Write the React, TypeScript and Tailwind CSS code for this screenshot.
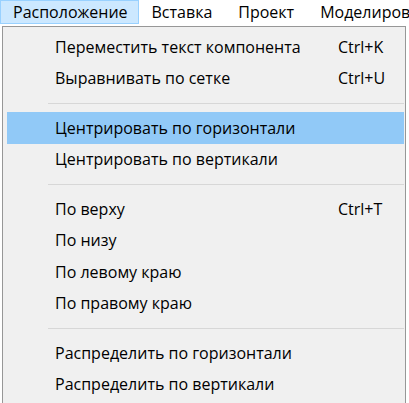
import React from "react";

type Item = { label: string; shortcut?: string; active?: boolean } | "sep";

const items: Item[] = [
  { label: "Переместить текст компонента", shortcut: "Ctrl+K" },
  { label: "Выравнивать по сетке", shortcut: "Ctrl+U" },
  "sep",
  { label: "Центрировать по горизонтали", active: true },
  { label: "Центрировать по вертикали" },
  "sep",
  { label: "По верху", shortcut: "Ctrl+T" },
  { label: "По низу" },
  { label: "По левому краю" },
  { label: "По правому краю" },
  "sep",
  { label: "Распределить по горизонтали" },
  { label: "Распределить по вертикали" },
];

const menus = ["Расположение", "Вставка", "Проект", "Моделирование"];

export default function App() {
  return (
    <div className="w-[409px] h-[403px] overflow-hidden bg-white text-[16px] leading-[20px] text-black font-['Open_Sans',sans-serif]">
      {/* Menu bar */}
      <div className="flex h-[24px] items-stretch whitespace-nowrap">
        {menus.map((m, i) => (
          <div
            key={m}
            className={
              i === 0
                ? "flex items-center pl-[12px] pr-[10px] bg-[#cce8ff] border border-[#99d1ff]"
                : "flex items-center px-[13px]"
            }
          >
            {m}
          </div>
        ))}
      </div>
      {/* Dropdown */}
      <div className="ml-[2px] mt-[2px] w-[404px] border border-[#979797] bg-[#f0f0f0] pt-[4px] pb-[4px]">
        {items.map((it, i) =>
          it === "sep" ? (
            <div key={i} className="h-[18px] flex items-center pl-[45px] pr-[1px]">
              <div className="h-px w-full bg-[#d7d7d7]" />
            </div>
          ) : (
            <div
              key={i}
              className={`h-[31.5px] flex items-center ml-[4px] mr-[1px] pl-[48px] whitespace-nowrap ${it.active ? "bg-[#91c9f7]" : ""}`}
            >
              <span className="w-[283px]">{it.label}</span>
              <span>{it.shortcut}</span>
            </div>
          )
        )}
      </div>
    </div>
  );
}
